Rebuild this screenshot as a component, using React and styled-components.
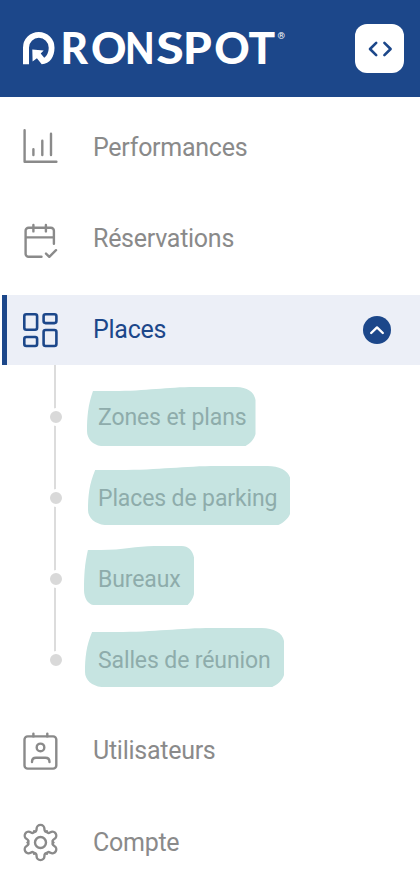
import React from "react";
import styled, { createGlobalStyle } from "styled-components";

const GlobalStyle = createGlobalStyle`
  body {
    margin: 0;
    background-color: #fff;
    font-family: Roboto, "Liberation Sans", sans-serif;
  }
`;

const Sidebar = styled.div`
  width: 420px;
  height: 880px;
  overflow: hidden;
  background-color: #fff;
`;

const Header = styled.header`
  display: flex;
  justify-content: space-between;
  align-items: center;
  box-sizing: border-box;
  height: 97px;
  padding: 0 16px 0 20px;
  background-color: #1c478a;
`;

const Logo = styled.svg`
  display: block;
  width: 270px;
  height: 97px;
  fill: #fff;
`;

const LogoLetter = styled.text`
  font-family: Lato, sans-serif;
  font-size: 44.6px;
  font-weight: 900;
`;

const Registered = styled.text`
  font-family: Roboto, sans-serif;
  font-size: 9.5px;
`;

const CodeButton = styled.button`
  display: flex;
  justify-content: center;
  align-items: center;
  width: 49px;
  height: 49px;
  padding: 0;
  border: none;
  border-radius: 12px;
  background-color: #fff;
  color: #1c478a;
  cursor: pointer;
`;

const Icon = styled.svg`
  display: block;
  flex: none;
  fill: none;
  stroke: currentColor;
  stroke-width: ${({ $stroke }) => $stroke || 2.4};
  stroke-linecap: round;
  stroke-linejoin: round;
`;

const Nav = styled.nav`
  display: flex;
  flex-direction: column;
  padding-top: 15px;
`;

const NavItem = styled.a`
  display: flex;
  align-items: center;
  box-sizing: border-box;
  height: 70px;
  margin: 0 0 ${({ $gap }) => $gap}px 2px;
  padding: 0 29px 0 ${({ $active }) => ($active ? 14 : 19)}px;
  border-left: ${({ $active }) => ($active ? "5px solid #1c478a" : "none")};
  background-color: ${({ $active }) => ($active ? "#eceff7" : "transparent")};
  color: ${({ $active }) => ($active ? "#1c478a" : "#8a8a8a")};
  cursor: pointer;
`;

const NavLabel = styled.span`
  flex: 1;
  margin-left: 32px;
  padding-top: ${({ $drop }) => $drop || 0}px;
  font-size: 25px;
  line-height: 30px;
  letter-spacing: -0.27px;
`;

const Toggle = styled.span`
  display: flex;
  justify-content: center;
  align-items: center;
  width: 28px;
  height: 28px;
  border-radius: 50%;
  background-color: #1c478a;
  color: #fff;
`;

const SubList = styled.ul`
  margin: 0;
  padding: 11.5px 0 15.5px 47px;
  list-style: none;
  background: linear-gradient(#dcdcdc, #dcdcdc) 54px 0 / 2px 290px no-repeat;
`;

const SubItem = styled.li`
  display: flex;
  align-items: center;
  height: 81px;
`;

const Dot = styled.span`
  width: 12px;
  height: 12px;
  border: 3px solid #fff;
  border-radius: 50%;
  background-color: #d9d9d9;
`;

const SubLabel = styled.span`
  position: relative;
  margin-left: 33px;
  padding-top: 2px;
  color: #8eacab;
  font-size: 23px;
  line-height: 28px;
  letter-spacing: -0.12px;
`;

const SubText = styled.span`
  position: relative;
`;

const Highlight = styled.svg`
  position: absolute;
  left: ${({ $left }) => $left}px;
  top: ${({ $top }) => $top}px;
  width: ${({ $width }) => $width}px;
  height: 59px;
  fill: #c6e4e1;
`;

const ChartIcon = () => (
  <Icon width="40" height="40" viewBox="0 0 40 40">
    <path d="M3.6 3.3V34.8H35.4" />
    <path d="M12.4 22.3V28M21.3 13.7V28M30 6.7V28" />
  </Icon>
);

const CalendarIcon = () => (
  <Icon width="40" height="40" viewBox="0 0 40 40">
    <path d="M20.5 37.7H7.6A3 3 0 0 1 4.6 34.7V11.8A3 3 0 0 1 7.6 8.8H29.9A3 3 0 0 1 32.9 11.8V24.8M4.6 18.4H32.9" />
    <path d="M12.4 5.9V12.4M24.9 5.9V12.4M25 34.6L28.3 37.8L35 31.2" />
  </Icon>
);

const PlacesIcon = () => (
  <Icon width="40" height="40" viewBox="0 0 40 40" $stroke={2.6}>
    <rect x="3.3" y="4.3" width="12.8" height="15.5" rx="2" />
    <rect x="22.6" y="4.3" width="12.8" height="8.8" rx="2" />
    <rect x="3.3" y="27" width="12.8" height="9" rx="2" />
    <rect x="22.6" y="20" width="12.8" height="16" rx="2" />
  </Icon>
);

const UsersIcon = () => (
  <Icon width="40" height="40" viewBox="0 0 40 40" $stroke={2.4}>
    <rect x="3.5" y="5.4" width="31.8" height="32.2" rx="3.2" />
    <path d="M12.4 2.6V5.4M26.3 2.6V5.4" />
    <circle cx="19.5" cy="16.4" r="3.8" />
    <path d="M11 31C11 28.2 12.4 26.8 15 26.8H24.4C27 26.8 28.5 28.2 28.5 31" />
  </Icon>
);

const GearIcon = () => (
  <Icon width="40" height="40" viewBox="0 0 40 40" $stroke={2.4}>
    <g transform="translate(19.5 19.5)">
      <circle r="5.5" />
      {[0, 60, 120, 180, 240, 300].map((angle) => (
        <path
          key={angle}
          transform={`rotate(${angle})`}
          d="M-6.4 -11.1C-4.8 -10.2 -3.9 -11.6 -3.9 -13.7A3.9 3.9 0 0 1 3.9 -13.7C3.9 -11.6 4.8 -10.2 6.4 -11.1"
        />
      ))}
    </g>
  </Icon>
);

const logoLetters = [
  { char: "R", x: 60.5, stretch: 0.95 },
  { char: "O", x: 91, stretch: 0.98 },
  { char: "N", x: 125, stretch: 0.86 },
  { char: "S", x: 156.2, stretch: 1.12 },
  { char: "P", x: 182.9, stretch: 1.03 },
  { char: "O", x: 214.2, stretch: 0.98 },
  { char: "T", x: 248.6, stretch: 0.99 },
];

const subItems = [
  { label: "Zones et plans", left: -10.8, top: -15, width: 168.5 },
  { label: "Places de parking", left: -10.3, top: -17, width: 202.3 },
  { label: "Bureaux", left: -14.2, top: -18.3, width: 110.2 },
  { label: "Salles de réunion", left: -13, top: -17, width: 199 },
];

const App = () => {
  return (
    <Sidebar>
      <GlobalStyle />
      <Header>
        <Logo viewBox="20 0 270 97">
          <path d="M23 64.2V47.7A15.7 15.7 0 0 1 54.5 47.7C54.5 56.5 50 64 41.7 64.2L36.9 58.2L32.6 61.4L32.3 49.5L43.7 50.5L40.7 53.4L44.2 57.7C47 56 48.7 52 48.7 47.7A9.8 9.8 0 0 0 29 47.7V64.2Z" />
          {logoLetters.map(({ char, x, stretch }) => (
            <LogoLetter
              key={x}
              transform={`translate(${x} 64.2) scale(${stretch} 1)`}
            >
              {char}
            </LogoLetter>
          ))}
          <Registered x="277.5" y="39">
            ®
          </Registered>
        </Logo>
        <CodeButton aria-label="Code">
          <Icon width="26" height="18" viewBox="0 0 26 18" $stroke={2.6}>
            <path d="M9.2 2.8L3 9L9.2 15.2M17.4 2.8L23.6 9L17.4 15.2" />
          </Icon>
        </CodeButton>
      </Header>
      <Nav>
        <NavItem $gap={21.5}>
          <ChartIcon />
          <NavLabel $drop={2}>Performances</NavLabel>
        </NavItem>
        <NavItem $gap={21.5}>
          <CalendarIcon />
          <NavLabel>Réservations</NavLabel>
        </NavItem>
        <NavItem $active $gap={0}>
          <PlacesIcon />
          <NavLabel>Places</NavLabel>
          <Toggle>
            <Icon width="18" height="12" viewBox="0 0 18 12">
              <path d="M3.2 9L9 3.4L14.8 9" />
            </Icon>
          </Toggle>
        </NavItem>
        <SubList>
          {subItems.map((item) => (
            <SubItem key={item.label}>
              <Dot />
              <SubLabel>
                <Highlight
                  viewBox="0 0 169 59"
                  preserveAspectRatio="none"
                  $left={item.left}
                  $top={item.top}
                  $width={item.width}
                >
                  <path d="M6 4H26C60 4 80 0 108 0H150C160 0 168 5 169 13V47C168 52 163 57 159 59H14C6 58 0 52 0 44C0 30 1 18 6 4Z" />
                </Highlight>
                <SubText>{item.label}</SubText>
              </SubLabel>
            </SubItem>
          ))}
        </SubList>
        <NavItem $gap={21.5}>
          <UsersIcon />
          <NavLabel>Utilisateurs</NavLabel>
        </NavItem>
        <NavItem $gap={0}>
          <GearIcon />
          <NavLabel>Compte</NavLabel>
        </NavItem>
      </Nav>
    </Sidebar>
  );
};

export default App;
